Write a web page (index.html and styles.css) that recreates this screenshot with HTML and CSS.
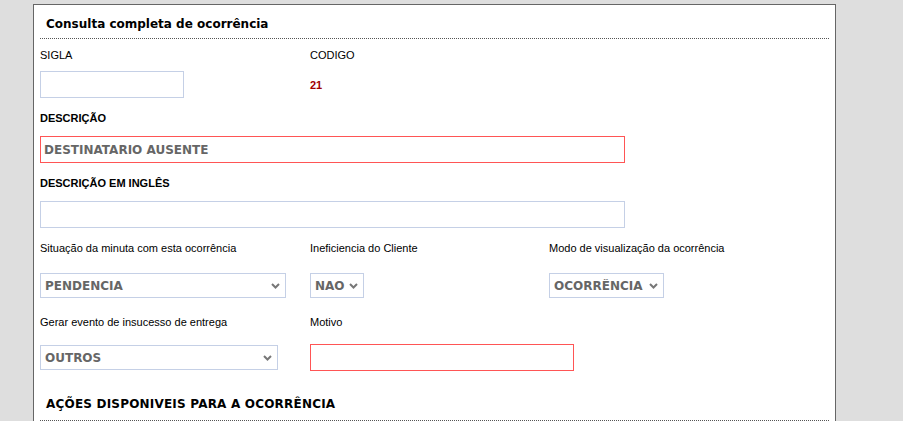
FILE: index.html
```html
<!DOCTYPE html>
<html lang="pt">
<head>
<meta charset="utf-8">
<title>Consulta completa de ocorrência</title>
<link rel="stylesheet" href="styles.css">
</head>
<body>
<div class="panel">
  <h2 class="title">Consulta completa de ocorrência</h2>

  <div class="row row-1">
    <div class="field col-a">
      <label class="lbl">SIGLA</label>
      <input class="inp inp-sigla" type="text">
    </div>
    <div class="field col-b">
      <label class="lbl">CODIGO</label>
      <div class="value">21</div>
    </div>
  </div>

  <div class="field block-desc">
    <label class="lbl lbl-strong">DESCRIÇÃO</label>
    <input class="inp inp-wide inp-error" type="text" value="DESTINATARIO AUSENTE">
  </div>

  <div class="field block-en">
    <label class="lbl lbl-strong">DESCRIÇÃO EM INGLÊS</label>
    <input class="inp inp-wide" type="text">
  </div>

  <div class="row row-3">
    <div class="field col-a">
      <label class="lbl">Situação da minuta com esta ocorrência</label>
      <div class="sel-wrap">
        <select class="sel sel-pend"><option>PENDENCIA</option></select>
        <svg class="chev" width="9" height="6" viewBox="0 0 9 6"><path d="M1 1 L4.5 4.5 L8 1" fill="none" stroke="#777" stroke-width="2"/></svg>
      </div>
    </div>
    <div class="field col-b">
      <label class="lbl">Ineficiencia do Cliente</label>
      <div class="sel-wrap">
        <select class="sel sel-nao"><option>NAO</option></select>
        <svg class="chev" width="9" height="6" viewBox="0 0 9 6"><path d="M1 1 L4.5 4.5 L8 1" fill="none" stroke="#777" stroke-width="2"/></svg>
      </div>
    </div>
    <div class="field">
      <label class="lbl">Modo de visualização da ocorrência</label>
      <div class="sel-wrap">
        <select class="sel sel-ocor"><option>OCORRÊNCIA</option></select>
        <svg class="chev" width="9" height="6" viewBox="0 0 9 6"><path d="M1 1 L4.5 4.5 L8 1" fill="none" stroke="#777" stroke-width="2"/></svg>
      </div>
    </div>
  </div>

  <div class="row row-4">
    <div class="field col-a">
      <label class="lbl">Gerar evento de insucesso de entrega</label>
      <div class="sel-wrap">
        <select class="sel sel-outros"><option>OUTROS</option></select>
        <svg class="chev" width="9" height="6" viewBox="0 0 9 6"><path d="M1 1 L4.5 4.5 L8 1" fill="none" stroke="#777" stroke-width="2"/></svg>
      </div>
    </div>
    <div class="field col-b">
      <label class="lbl">Motivo</label>
      <input class="inp inp-motivo inp-error" type="text">
    </div>
  </div>

  <h3 class="section">AÇÕES DISPONIVEIS PARA A OCORRÊNCIA</h3>
</div>
</body>
</html>
```

FILE: styles.css
```css
html, body {
  margin: 0;
  padding: 0;
  background: #dedede;
}

body {
  font-family: "Liberation Sans", Arial, sans-serif;
  font-size: 11px;
  color: #000;
}

.panel {
  margin: 4px 0 0 33px;
  width: 789px;
  min-height: 500px;
  padding: 0 6px;
  background: #fff;
  border: 1px solid #666;
}

.title,
.section {
  margin: 0;
  font-family: "DejaVu Sans", Verdana, sans-serif;
  font-weight: bold;
  font-size: 12px;
  line-height: 15px;
  color: #000;
  border-bottom: 1px dotted #555;
}

.title {
  padding: 12px 6px 6px;
}

.section {
  margin-top: 26px;
  padding: 0 6px 8px;
  letter-spacing: 0.2px;
}

.row {
  display: flex;
  align-items: flex-start;
}

.field {
  display: flex;
  flex-direction: column;
  align-items: flex-start;
}

.col-a { width: 270px; }
.col-b { width: 239px; }

.lbl {
  display: block;
  line-height: 13px;
  height: 13px;
  white-space: nowrap;
}

.lbl-strong { font-weight: bold; }

.row-1 { margin-top: 10px; }
.row-1 .lbl { margin-bottom: 9px; }

.block-desc { margin-top: 14px; }
.block-en { margin-top: 14px; }
.block-desc .lbl,
.block-en .lbl { margin-bottom: 11px; }

.row-3 { margin-top: 14px; }
.row-3 .lbl { margin-bottom: 18px; }

.row-4 { margin-top: 18px; }
.row-4 .lbl { margin-bottom: 15px; }
.row-4 .sel-wrap { margin-top: 1px; }

.inp {
  box-sizing: border-box;
  height: 27px;
  margin: 0;
  padding: 0 3px;
  border: 1px solid #c5d0e6;
  background: #fff;
  font-family: "DejaVu Sans", Verdana, sans-serif;
  font-weight: bold;
  font-size: 12px;
  color: #666;
  outline: none;
}

.inp-error { border-color: #f55; }

.inp-sigla { width: 144px; }
.inp-wide { width: 585px; }
.inp-motivo { width: 264px; }

.value {
  height: 27px;
  line-height: 28px;
  font-weight: bold;
  color: #a00000;
}

.sel-wrap {
  position: relative;
  display: inline-block;
}

.sel {
  appearance: none;
  -webkit-appearance: none;
  box-sizing: border-box;
  display: block;
  height: 25px;
  margin: 0;
  padding: 0 0 0 4px;
  border: 1px solid #c5d0e6;
  border-radius: 0;
  background: #fff;
  font-family: "DejaVu Sans", Verdana, sans-serif;
  font-weight: bold;
  font-size: 12px;
  color: #666;
  outline: none;
}

.sel-pend { width: 246px; }
.sel-nao { width: 54px; }
.sel-ocor { width: 115px; }
.sel-outros { width: 238px; }

.chev {
  position: absolute;
  right: 6px;
  top: 10px;
  pointer-events: none;
}
```
